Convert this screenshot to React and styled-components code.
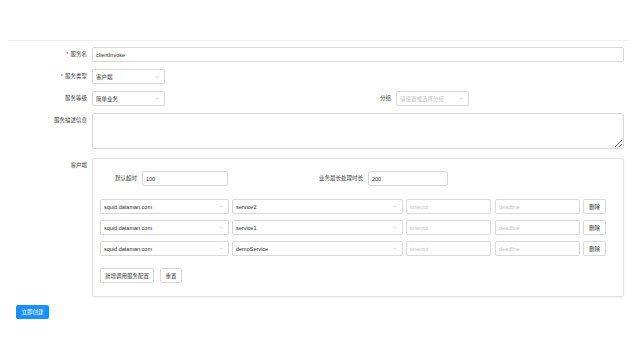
import React from 'react';
import styled, { createGlobalStyle } from 'styled-components';

const GlobalStyle = createGlobalStyle`
  html, body {
    margin: 0;
    background: #fff;
  }
  body {
    font-family: "Liberation Sans", "Noto Sans CJK SC", sans-serif;
    font-size: 5.5px;
    color: #333;
  }
  * { box-sizing: border-box; }
`;

const Page = styled.div`
  width: 640px;
  height: 360px;
  padding: 40px 12px 0 8px;
`;

const Form = styled.div`
  border-top: 1px solid #f0f0f0;
  padding: 6px 4px 0 0;
  display: flex;
  flex-direction: column;
`;

const Row = styled.div`
  display: flex;
  align-items: flex-start;
  margin-bottom: ${(p) => p.$mb ?? 7}px;
`;

const Half = styled.div`
  display: flex;
  align-items: flex-start;
  width: ${(p) => p.$w}px;
`;

const Label = styled.div`
  width: ${(p) => p.$w || 84}px;
  flex: none;
  text-align: right;
  line-height: 15px;
  padding-right: 5px;
  color: #3a3a3a;
  white-space: nowrap;
`;

const Star = styled.span`
  color: #f5222d;
  margin-right: 2px;
`;

const Box = styled.div`
  height: 15px;
  width: ${(p) => (p.$w ? `${p.$w}px` : 'auto')};
  flex: ${(p) => (p.$w ? 'none' : '1')};
  margin-left: ${(p) => p.$ml || 0}px;
  border: 1px solid #d9d9d9;
  border-radius: 2px;
  background: #fff;
  padding: 0 3px;
  display: flex;
  align-items: center;
  justify-content: space-between;
  color: ${(p) => (p.$ph ? '#bfbfbf' : '#2b2b2b')};
  white-space: nowrap;
`;

const Area = styled.textarea`
  flex: 1;
  height: 36px;
  border: 1px solid #d9d9d9;
  border-radius: 2px;
  margin: 0;
  padding: 3px;
  font: inherit;
  outline: none;
`;

const Card = styled.div`
  flex: 1;
  display: flex;
  flex-direction: column;
  border: 1px solid #e4e4e4;
  border-radius: 2px;
  padding: 12px 7px 13px 7px;
  box-shadow: 0 1px 2px rgba(0, 0, 0, 0.07);
`;

const InnerRow = styled.div`
  display: flex;
  gap: ${(p) => p.$gap ?? 3}px;
  margin-top: ${(p) => p.$mt || 0}px;
  margin-bottom: ${(p) => p.$mb || 0}px;
`;

const Button = styled.div`
  height: ${(p) => p.$h || 15}px;
  width: ${(p) => p.$w}px;
  flex: none;
  border: 1px solid ${(p) => (p.$primary ? '#1890ff' : '#d9d9d9')};
  background: ${(p) => (p.$primary ? '#1890ff' : '#fff')};
  color: ${(p) => (p.$primary ? '#fff' : '#333')};
  border-radius: 2px;
  display: flex;
  align-items: center;
  justify-content: center;
  white-space: nowrap;
`;

const Footer = styled.div`
  display: flex;
  padding-left: 8px;
`;

const ArrowIcon = styled.svg`
  margin-right: 2px;
  flex: none;
`;

const Arrow = () => (
  <ArrowIcon width="4" height="3" viewBox="0 0 8 5">
    <path d="M1 1 L4 4 L7 1" fill="none" stroke="#bfbfbf" strokeWidth="1.2" />
  </ArrowIcon>
);

const Select = ({ w, ph, children }) => (
  <Box $w={w} $ph={ph}>
    <span>{children}</span>
    <Arrow />
  </Box>
);

const services = ['service2', 'service1', 'demoService'];

export default function App() {
  return (
    <Page>
      <GlobalStyle />
      <Form>
        <Row>
          <Label><Star>*</Star>服务名</Label>
          <Box>clientInvoke</Box>
        </Row>
        <Row>
          <Label><Star>*</Star>服务类型</Label>
          <Select w={73}>客户端</Select>
        </Row>
        <Row>
          <Half $w={300}>
            <Label>服务等级</Label>
            <Select w={73}>简单业务</Select>
          </Half>
          <Half $w={170}>
            <Label $w={88}>分组</Label>
            <Select w={73} ph>请设置或选择分组</Select>
          </Half>
        </Row>
        <Row $mb={9}>
          <Label>服务描述信息</Label>
          <Area />
        </Row>
        <Row $mb={8}>
          <Label>客户端</Label>
          <Card>
            <InnerRow $gap={0} $mb={13}>
              <Half $w={200}>
                <Label $w={42}>默认超时</Label>
                <Box $w={86}>100</Box>
              </Half>
              <Half $w={200}>
                <Label $w={68}>业务最长处理时长</Label>
                <Box $w={80}>200</Box>
              </Half>
            </InnerRow>
            {services.map((s) => (
              <InnerRow key={s} $mb={6}>
                <Select w={129}>squid.dataman.com</Select>
                <Select w={171}>{s}</Select>
                <Box $w={85} $ph>timeout</Box>
                <Box $w={85} $ph $ml={1}>deadline</Box>
                <Button $w={23}>删除</Button>
              </InnerRow>
            ))}
            <InnerRow $gap={6} $mt={6}>
              <Button $w={54}>新增调用服务配置</Button>
              <Button $w={22}>重置</Button>
            </InnerRow>
          </Card>
        </Row>
      </Form>
      <Footer>
        <Button $primary $w={33} $h={14}>立即创建</Button>
      </Footer>
    </Page>
  );
}
